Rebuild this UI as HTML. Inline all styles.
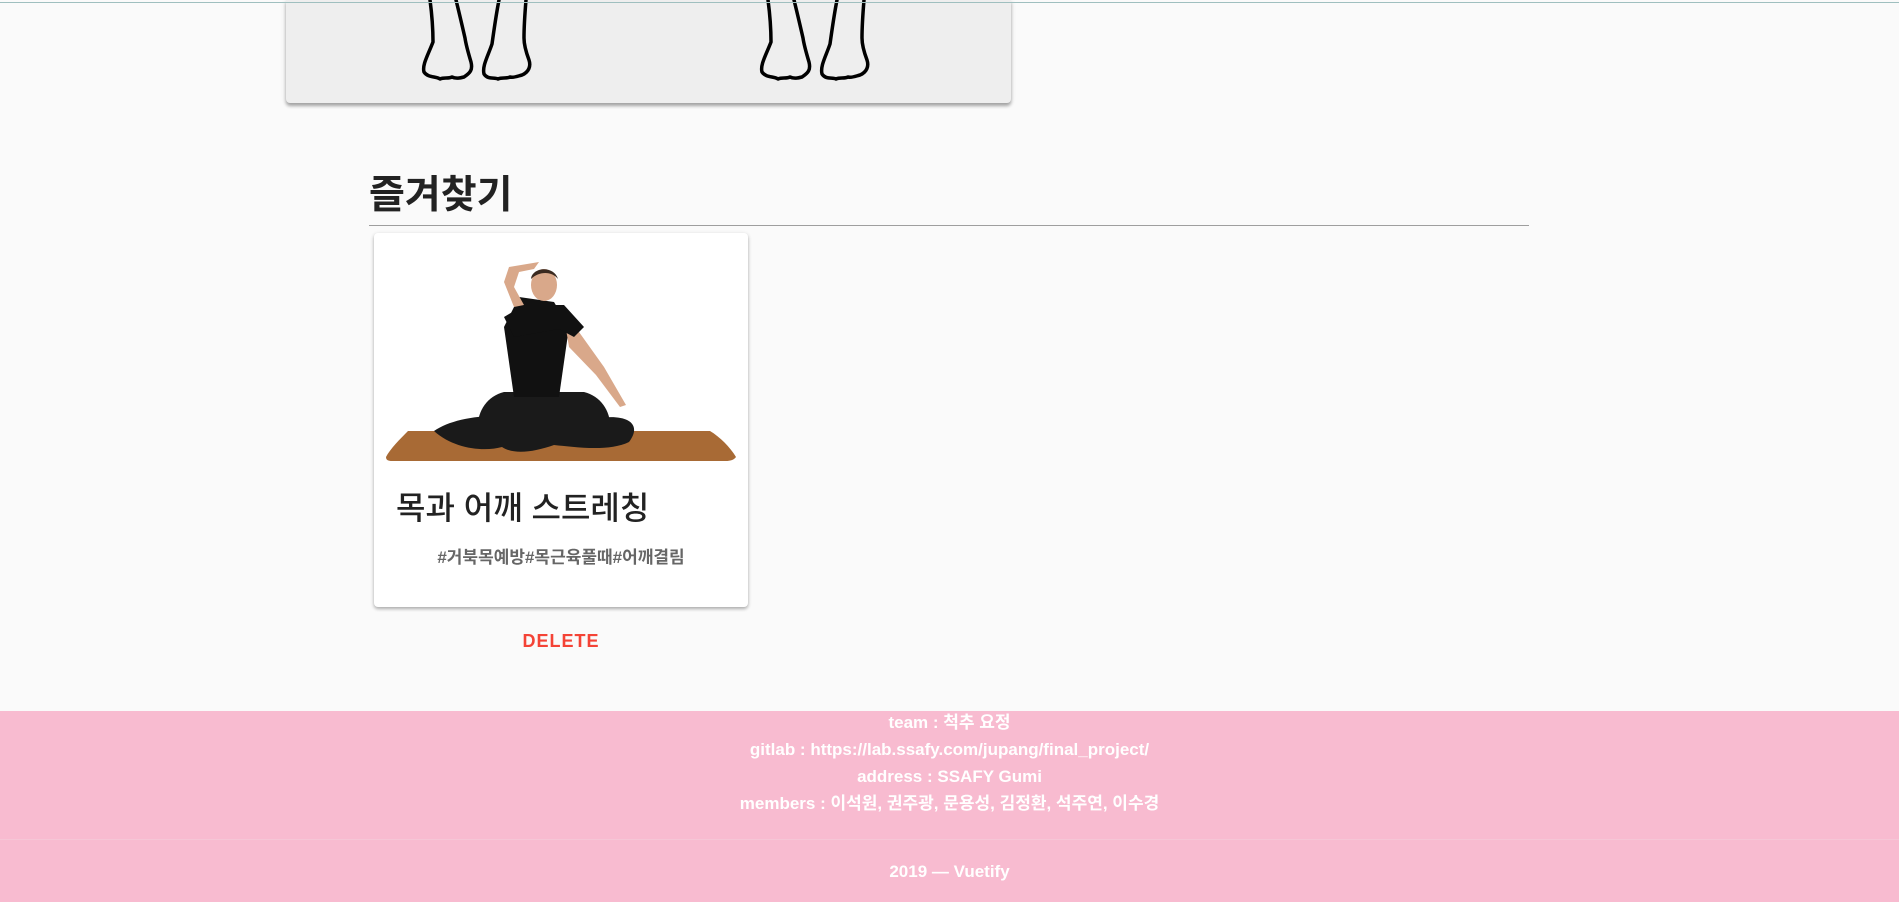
<!DOCTYPE html>
<html><head><meta charset="utf-8">
<style>
html,body{margin:0;padding:0;}
body{width:1899px;height:902px;background:#fafafa;position:relative;overflow:hidden;font-family:"Liberation Sans","Noto Sans CJK KR",sans-serif;}
.topline{position:absolute;left:0;top:2px;width:1899px;height:1px;background:#9fbfbf;}
.topcard{position:absolute;left:286px;top:0;width:725px;height:103px;background:#eeeeee;border-radius:0 0 4px 4px;box-shadow:0 3px 3px rgba(0,0,0,.3),0 1px 6px rgba(0,0,0,.12);}
.h{position:absolute;left:369px;top:170px;font-size:39px;font-weight:bold;color:#222;line-height:52px;}
.hr{position:absolute;left:369px;top:225px;width:1160px;height:1px;background:#9e9e9e;}
.card{position:absolute;left:374px;top:233px;width:374px;height:374px;background:#fff;border-radius:4px;box-shadow:0 2px 3px rgba(0,0,0,.25),0 1px 5px rgba(0,0,0,.1);}
.title{position:absolute;left:22px;top:255px;font-size:32px;color:#222;font-weight:500;line-height:40px;}
.tags{position:absolute;left:0;width:374px;text-align:center;top:310px;font-size:17px;font-weight:bold;color:#666;}
.del{position:absolute;left:374px;width:374px;text-align:center;top:631px;font-size:18px;font-weight:bold;color:#f44336;letter-spacing:1px;}
.footer{position:absolute;left:0;top:711px;width:1899px;height:191px;background:#f8bbd0;color:#fff;font-weight:bold;font-size:17px;text-align:center;}
.footer .l{position:absolute;left:0;width:100%;line-height:27px;}
.fdiv{position:absolute;left:0;top:128px;width:100%;height:1px;background:#f5c6d6;}
</style></head><body>
<div class="topcard">
<svg width="725" height="103" style="position:absolute;left:0;top:0">
<g fill="none" stroke="#000" stroke-width="3.5" stroke-linejoin="round" stroke-linecap="round">
<g id="f">
<path d="M144 0 C146 15 147 30 147 42 C142 55 136 65 138 72 C142 78 150 76 154 79 C158 77 162 79 166 77 C170 79 174 78 178 77 C184 73 187 70 185 62 C182 52 180 45 179 38 C176 25 173 12 170 0"/>
<path d="M213 0 C210 15 208 30 206 44 C202 56 196 66 198 74 C202 80 208 77 212 79 C216 77 220 79 224 77 C228 78 232 76 236 75 C243 72 245 66 243 60 C240 52 238 45 238 38 C238 25 239 12 240 0"/>
</g>
<use href="#f" x="338"/>
</g></svg>
</div>
<div class="topline"></div>
<div class="h">즐겨찾기</div>
<div class="hr"></div>
<div class="card">
<svg width="374" height="240" style="position:absolute;left:0;top:0">
<path d="M12 224 C16 216 26 206 34 198 L336 198 C346 204 356 214 362 224 C360 227 356 228 352 228 L18 228 C14 228 12 227 12 224 Z" fill="#a86a35"/>
<g transform="translate(0,24)">
<path d="M60 174 C80 160 120 155 160 162 L220 162 C250 156 270 165 255 185 C235 195 200 190 180 188 C160 195 140 198 128 190 C110 195 80 192 60 174 Z" fill="#1a1a1a"/>
<path d="M105 180 C100 160 110 140 130 135 L210 135 C230 140 240 160 235 180 Z" fill="#1a1a1a"/>
<path d="M145 40 L180 45 L195 70 L185 140 L140 140 L130 70 Z" fill="#111"/>
<path d="M190 60 L205 75 L230 110 L252 148 L246 150 L222 118 L195 90 Z" fill="#d9a88a"/>
<path d="M140 50 L130 25 L135 10 L165 5 L160 12 L145 15 L140 30 L150 48 Z" fill="#d9a88a"/>
<ellipse cx="170" cy="28" rx="13" ry="16" fill="#d9a88a"/>
<path d="M157 22 C158 10 180 8 184 22 C178 14 165 14 157 22 Z" fill="#3a2a20"/>
<path d="M150 48 L190 48 L210 70 L200 80 L185 72 L140 80 L130 60 Z" fill="#111"/>
</g>
</svg>
<div class="title">목과 어깨 스트레칭</div>
<div class="tags">#거북목예방#목근육풀때#어깨결림</div>
</div>
<div class="del">DELETE</div>
<div class="footer">
<div class="l" style="top:-2px">team : 척추 요정</div>
<div class="l" style="top:25px">gitlab : https://lab.ssafy.com/jupang/final_project/</div>
<div class="l" style="top:52px">address : SSAFY Gumi</div>
<div class="l" style="top:79px">members : 이석원, 권주광, 문용성, 김정환, 석주연, 이수경</div>
<div class="fdiv"></div>
<div class="l" style="top:147px">2019 — Vuetify</div>
</div>
</body></html>
